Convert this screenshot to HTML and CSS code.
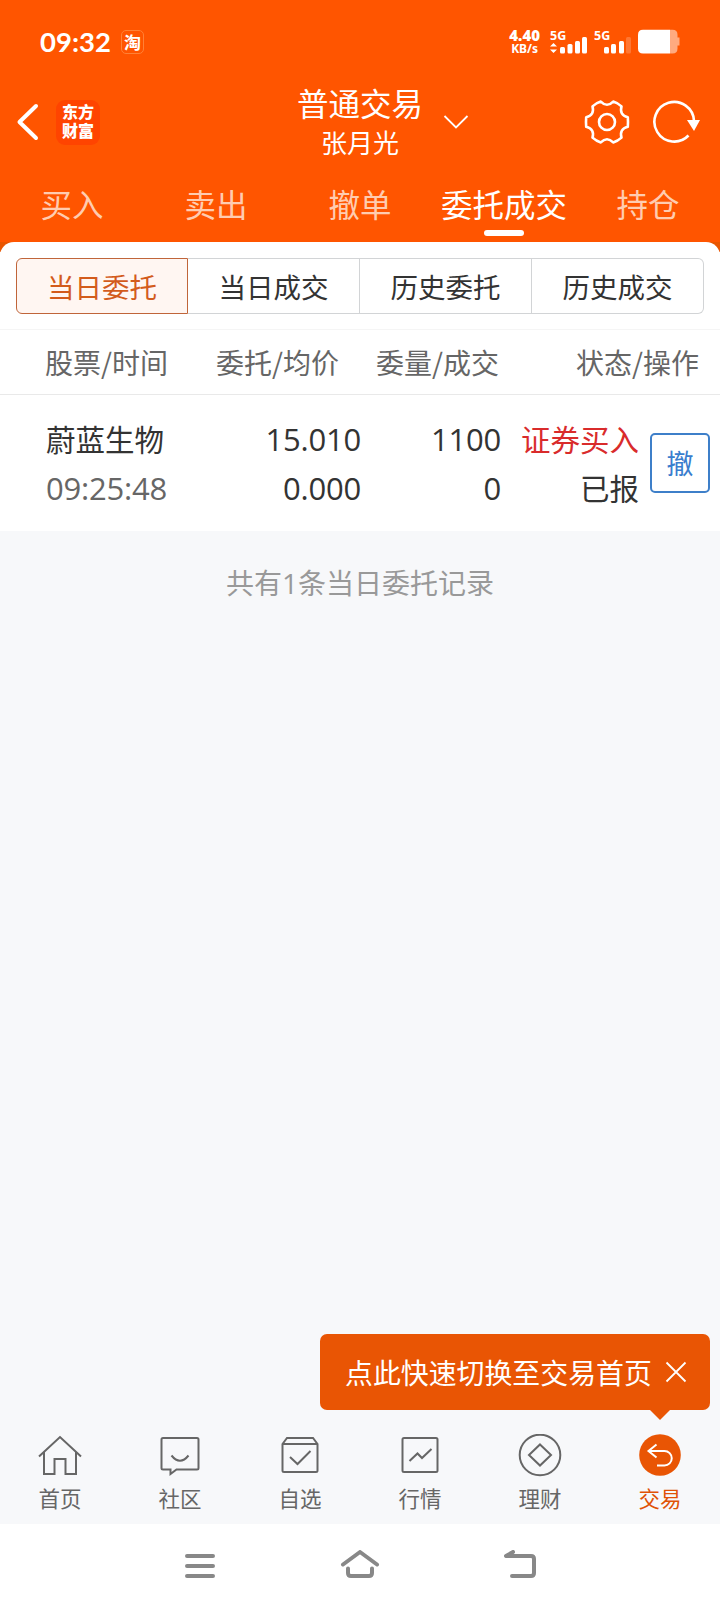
FILE: index.html
```html
<!DOCTYPE html>
<html lang="zh-CN">
<head>
    <meta charset="UTF-8">
    <meta name="viewport" content="width=device-width, initial-scale=1.0">
    <title>普通交易</title>
    <link rel="stylesheet" href="styles.css">
</head>
<body>

<header class="top">
    <div class="status-bar">
        <span class="clock">09:32</span>
        <span class="tao">淘</span>
        <div class="net-speed"><b>4.40</b><span>KB/s</span></div>
        <svg class="signals" width="130" height="26" viewBox="0 0 130 26">
            <g fill="#fff">
                <text class="net-type" x="0" y="11">5G</text>
                <path d="M0 17.5 L3.5 14 L7 17.5 Z M0 20.5 L3.5 24 L7 20.5 Z"/>
                <rect x="10" y="18" width="5" height="6.5" rx="1.5"/>
                <rect x="17.5" y="15" width="5" height="9.5" rx="1.5"/>
                <rect x="25" y="12" width="5" height="12.5" rx="1.5"/>
                <rect x="32" y="8" width="5" height="16.5" rx="1.5"/>
                <text class="net-type" x="44" y="11">5G</text>
                <rect x="54" y="18" width="5" height="6.5" rx="1.5"/>
                <rect x="61" y="15" width="5" height="9.5" rx="1.5"/>
                <rect x="69" y="12" width="5" height="12.5" rx="1.5"/>
                <rect x="76" y="8" width="5" height="16.5" rx="1.5" opacity=".2"/>
                <path d="M120 .7 H93 Q88 .7 88 5.7 V19.5 Q88 24.5 93 24.5 H120 Z"/>
                <path d="M120 .7 H122.5 Q127.5 .7 127.5 5.7 V8.5 H129.5 V16.5 H127.5 V19.5 Q127.5 24.5 122.5 24.5 H120 Z" opacity=".5"/>
            </g>
        </svg>
    </div>

    <div class="title-bar">
        <div class="title-left">
            <svg width="24" height="38" viewBox="0 0 24 38"><path d="M20 3 L3.5 19 L20 35" fill="none" stroke="#fff" stroke-width="4" stroke-linecap="round" stroke-linejoin="round"/></svg>
            <div class="logo">东方<br>财富</div>
        </div>
        <div class="title">
            <h1>普通交易</h1>
            <p>张月光</p>
        </div>
        <div class="title-right">
            <svg class="chevron" width="26" height="16" viewBox="0 0 26 16"><path d="M1.5 2 L13 13.5 L24.5 2" fill="none" stroke="#fff" stroke-width="1.8"/></svg>
            <svg class="gear" width="46" height="46" viewBox="-23 -23 46 46">
                <g fill="none" stroke="#fff" stroke-width="2.6" stroke-linejoin="round">
                    <path d="M20.8 -4.8 Q21.2 0 20.8 4.8 Q12.1 7 14.5 15.6 Q10.9 18.9 6.2 20.4 Q0 14 -6.2 20.4 Q-10.9 18.9 -14.5 15.6 Q-12.1 7 -20.8 4.8 Q-21.2 0 -20.8 -4.8 Q-12.1 -7 -14.5 -15.6 Q-10.9 -18.9 -6.2 -20.4 Q0 -14 6.2 -20.4 Q10.9 -18.9 14.5 -15.6 Q12.1 -7 20.8 -4.8 Z"/>
                    <circle r="8"/>
                </g>
            </svg>
            <svg class="refresh" width="50" height="46" viewBox="-23 -23 50 46">
                <path d="M20 -1 A19.8 19.8 0 1 0 14.5 13.5" fill="none" stroke="#fff" stroke-width="2.6"/>
                <path d="M13 -2 H26 L20 9 Z" fill="#fff"/>
            </svg>
        </div>
    </div>

    <nav class="tabs">
        <a class="tab">买入</a>
        <a class="tab">卖出</a>
        <a class="tab">撤单</a>
        <a class="tab active">委托成交</a>
        <a class="tab">持仓</a>
    </nav>
</header>

<main class="content">
    <section class="sheet">
        <div class="segments">
            <button class="segment selected">当日委托</button>
            <button class="segment">当日成交</button>
            <button class="segment">历史委托</button>
            <button class="segment">历史成交</button>
        </div>
        <div class="list-head">
            <span>股票/时间</span>
            <span>委托/均价</span>
            <span>委量/成交</span>
            <span>状态/操作</span>
        </div>
        <div class="order">
            <div class="cell name"><span>蔚蓝生物</span><span class="num time">09:25:48</span></div>
            <div class="cell"><span class="num">15.010</span><span class="num">0.000</span></div>
            <div class="cell"><span class="num">1100</span><span class="num">0</span></div>
            <div class="cell"><span class="buy">证券买入</span><span>已报</span></div>
            <button class="cancel">撤</button>
        </div>
    </section>
    <p class="summary">共有<span class="count">1</span>条当日委托记录</p>
</main>

<footer class="bottom">
    <div class="tip">
        <span>点此快速切换至交易首页</span>
        <svg width="22" height="22" viewBox="0 0 22 22"><path d="M1.5 1.5 L20.5 20.5 M20.5 1.5 L1.5 20.5" stroke="#fff" stroke-width="1.8"/></svg>
    </div>
    <nav class="bottom-nav">
        <a class="nav-item">
            <svg width="44" height="44" viewBox="0 0 44 44"><path d="M1 22.5 L22 3 L43 22.5 M6 18.5 V40 H16.5 V25 H27.5 V40 H38 V18.5"/></svg>
            首页
        </a>
        <a class="nav-item">
            <svg width="44" height="44" viewBox="0 0 44 44"><path d="M5 4 H39 Q40.5 4 40.5 5.5 V34 Q40.5 35.5 39 35.5 H18.5 L12.5 40 V35.5 H5 Q3.5 35.5 3.5 34 V5.5 Q3.5 4 5 4 Z M13.5 21.5 Q22 32 30.5 21.5"/></svg>
            社区
        </a>
        <a class="nav-item">
            <svg width="44" height="44" viewBox="0 0 44 44"><path d="M4.5 10 L9 4 H35 L39.5 10 V36.5 Q39.5 38 38 38 H6 Q4.5 38 4.5 36.5 Z M4.5 10 H39.5 M12 23 L19.5 30 L32.5 17"/></svg>
            自选
        </a>
        <a class="nav-item">
            <svg width="44" height="44" viewBox="0 0 44 44"><rect x="4.5" y="4" width="35" height="34" rx="1.5"/><path d="M11.5 27 L19.5 19.5 L24 24 L33.5 15"/></svg>
            行情
        </a>
        <a class="nav-item">
            <svg width="44" height="44" viewBox="0 0 44 44"><circle cx="22" cy="21" r="20.3"/><path d="M22 10.5 L33 21 L22 31.5 L11 21 Z"/></svg>
            理财
        </a>
        <a class="nav-item current">
            <svg width="44" height="44" viewBox="0 0 44 44"><circle class="disc" cx="22" cy="21" r="20.8"/><path d="M18.5 10.5 L10.5 17 L18.5 23.5 M10.5 17 H26.5 A7 7 0 0 1 26.5 31.5 H19"/></svg>
            交易
        </a>
    </nav>
    <div class="system-nav">
        <svg width="40" height="32" viewBox="0 0 40 32"><path d="M7 6 H33 M7 16 H33 M7 26 H33"/></svg>
        <svg width="40" height="32" viewBox="0 0 40 32"><path d="M3 14.5 L20 2 L37 14.5 M8 18.5 V23 Q8 26 11 26 H29 Q32 26 32 23 V18.5"/></svg>
        <svg width="40" height="32" viewBox="0 0 40 32"><path d="M13 2 L6 6 H31 Q34 6 34 9 V23 Q34 26 31 26 H12"/></svg>
    </div>
</footer>

</body>
</html>
```
FILE: styles.css
```css
* {
    box-sizing: border-box;
}
body {
    margin: 0;
    width: 720px;
    height: 1608px;
    display: flex;
    flex-direction: column;
    background-color: #f7f8fa;
    color: #333;
    font-family: "Noto Sans CJK SC", sans-serif;
}
h1, p {
    margin: 0;
    font-weight: 400;
}
button {
    margin: 0;
    padding: 0;
    font-family: inherit;
    background: none;
}
svg {
    display: block;
    flex: none;
}

/* Orange header */
.top {
    height: 242px;
    background-color: #ff5500;
    color: #fff;
}
.status-bar {
    height: 82px;
    display: flex;
    align-items: center;
    padding: 2px 40px 0;
}
.clock {
    width: 81px;
    font: 700 27.5px/34px Lato, sans-serif;
}
.tao {
    width: 23px;
    height: 24px;
    border: 1px solid #ff8136;
    border-radius: 5px;
    font-size: 17px;
    font-weight: 700;
    line-height: 21px;
    text-align: center;
}
.net-speed {
    margin-left: auto;
    margin-right: 10px;
    display: flex;
    flex-direction: column;
    align-items: center;
    font: 700 12px/14px "Noto Sans", sans-serif;
}
.net-speed b {
    font-size: 15px;
}
.signals {
    overflow: visible;
}
.net-type {
    font: 700 12.5px "Noto Sans", sans-serif;
}
.title-bar {
    height: 76px;
    display: grid;
    grid-template-columns: 240px 240px 240px;
}
.title-left {
    display: flex;
    align-items: center;
    padding-left: 16px;
    gap: 16px;
}
.logo {
    width: 44px;
    height: 45px;
    padding-top: 2px;
    border-radius: 9px;
    background-color: #ff4400;
    font-size: 16px;
    font-weight: 900;
    line-height: 19px;
    text-align: center;
}
.title {
    text-align: center;
}
.title h1 {
    font-size: 31.5px;
    line-height: 40px;
}
.title p {
    font-size: 26px;
    line-height: 40px;
}
.title-right {
    display: flex;
    align-items: center;
    margin-left: -37px;
}
.gear {
    margin-left: 115px;
}
.refresh {
    margin-left: 21px;
}
.tabs {
    display: grid;
    grid-template-columns: repeat(5, 1fr);
}
.tab {
    display: flex;
    flex-direction: column;
    align-items: center;
    padding-top: 22px;
    font-size: 31.5px;
    line-height: 46px;
    color: #ffccb0;
}
.tab.active {
    color: #fff;
}
.tab.active::after {
    content: "";
    width: 40px;
    height: 6px;
    margin-top: 4px;
    border-radius: 3px;
    background-color: #fff;
}

/* Order list */
.content {
    flex: 1;
    background: linear-gradient(#e85500 10px, transparent 10px);
}
.sheet {
    height: 289px;
    border-radius: 14px 14px 0 0;
    background-color: #fff;
    padding-top: 16px;
}
.segments {
    margin: 0 16px;
    height: 56px;
    display: grid;
    grid-template-columns: repeat(4, 1fr);
}
.segment {
    border: 1px solid #d2d4d6;
    border-left-width: 0;
    color: #333;
    font-size: 27.5px;
    line-height: 50px;
}
.segment:last-child {
    border-radius: 0 6px 6px 0;
}
.segment.selected {
    border: 1px solid #c0653a;
    border-radius: 6px 0 0 6px;
    background-color: #fff6f2;
    color: #d35b1c;
}
.list-head {
    height: 66px;
    margin-top: 15px;
    padding: 0 20px 0 45px;
    border-top: 1px solid #f5f5f5;
    border-bottom: 1px solid #e9e9e9;
    display: grid;
    grid-template-columns: 171px 160px 200px 123px;
    align-items: center;
    color: #666;
    font-size: 28px;
    line-height: 40px;
}
.list-head span {
    white-space: nowrap;
}
.order {
    height: 136px;
    padding: 19px 10px 0 46px;
    display: grid;
    grid-template-columns: 155px 160px 140px 138px 71px;
    font-size: 29.5px;
}
.cell {
    display: flex;
    flex-direction: column;
    align-items: flex-end;
    line-height: 49px;
}
.cell.name {
    align-items: flex-start;
}
.num {
    height: 49px;
    padding-top: 1px;
    font-family: "Open Sans", sans-serif;
    font-size: 31px;
    letter-spacing: -0.2px;
}
.time {
    color: #666;
}
.buy {
    color: #d92b2b;
}
.cancel {
    justify-self: end;
    width: 60px;
    height: 60px;
    margin-top: 19px;
    border: 2px solid #3e7fc9;
    border-radius: 5px;
    color: #3a7dce;
    font-size: 27px;
    line-height: 54px;
}
.summary {
    padding-top: 31px;
    text-align: center;
    color: #999;
    font-size: 28px;
    line-height: 40px;
}
.count {
    font-family: "Open Sans", sans-serif;
}

/* Bottom area */
.bottom {
    display: flex;
    flex-direction: column;
}
.tip {
    position: relative;
    align-self: flex-end;
    width: 390px;
    height: 76px;
    margin-right: 10px;
    padding-left: 25px;
    display: flex;
    align-items: center;
    gap: 13px;
    border-radius: 7px;
    background-color: #e95504;
    color: #fff;
    font-size: 27.9px;
    white-space: nowrap;
}
.tip::after {
    content: "";
    position: absolute;
    top: 100%;
    right: 40px;
    border: 10px solid transparent;
    border-top-color: #e95504;
    border-bottom: 0;
}
.bottom-nav {
    height: 114px;
    padding-top: 24px;
    display: grid;
    grid-template-columns: repeat(6, 1fr);
}
.nav-item {
    display: flex;
    flex-direction: column;
    align-items: center;
    color: #666;
    font-size: 21.5px;
    line-height: 39px;
}
.nav-item svg {
    fill: none;
    stroke: #666;
    stroke-width: 2;
}
.nav-item.current {
    color: #e05206;
}
.nav-item.current svg {
    stroke: #fff;
}
.nav-item .disc {
    fill: #e95504;
    stroke: none;
}
.system-nav {
    height: 84px;
    padding: 26px 180px 0;
    display: flex;
    justify-content: space-between;
    background-color: #fff;
}
.system-nav svg {
    fill: none;
    stroke: #888;
    stroke-width: 4;
    stroke-linecap: round;
    stroke-linejoin: round;
}
```
